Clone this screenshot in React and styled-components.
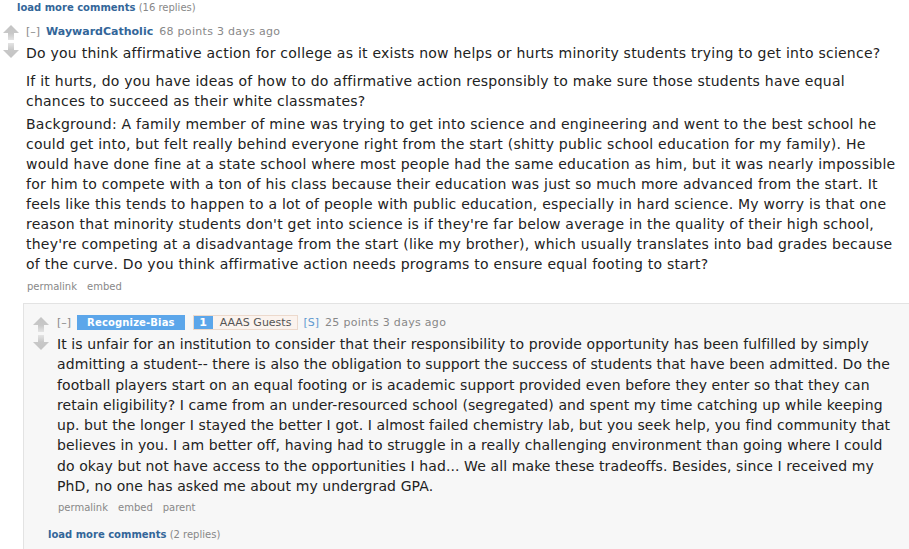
import React from 'react';
import styled, { createGlobalStyle } from 'styled-components';

const GlobalStyle = createGlobalStyle`
  body {
    margin: 0;
    background: #ffffff;
    font-family: "DejaVu Sans", Verdana, sans-serif;
    color: #222222;
  }
`;

const Page = styled.div`
  width: 909px;
  height: 549px;
  overflow: hidden;
  padding-top: 1px;
  box-sizing: border-box;
`;

// "load more comments" row
const LoadMore = styled.div`
  font-size: 10px;
  line-height: 13px;
  padding-left: ${({ indent }) => indent}px;
  margin-top: ${({ top }) => top || 0}px;
  color: #888888;

  b {
    color: #336699;
    font-weight: bold;
  }
`;

const Comment = styled.div`
  display: flex;
  align-items: flex-start;
  margin-top: ${({ top }) => top || 0}px;
`;

const Midcol = styled.div`
  width: ${({ width }) => width}px;
  padding-left: ${({ left }) => left}px;
  padding-top: ${({ top }) => top}px;
  box-sizing: border-box;
  display: flex;
  flex-direction: column;
  gap: 3px;
  flex-shrink: 0;
`;

const Entry = styled.div`
  flex: 1;
  min-width: 0;
`;

const Tagline = styled.div`
  display: flex;
  align-items: center;
  gap: 6px;
  font-size: 11px;
  line-height: 15px;
  color: #888888;
  white-space: nowrap;
`;

const Expand = styled.span`
  color: #888888;
`;

const Author = styled.span`
  color: #336699;
  font-weight: bold;
`;

const Meta = styled.span`
  letter-spacing: 0.3px;
`;

const AuthorFlair = styled.span`
  background: #5ca6ea;
  color: #ffffff;
  font-size: 10px;
  font-weight: bold;
  padding: 0 10px;
  line-height: 15px;
  letter-spacing: 0.15px;
`;

const UserFlair = styled.span`
  display: inline-flex;
  border: 1px solid #ecd9cc;
  background: #fbf3ee;
  color: #555555;
  line-height: 13px;
  margin-left: 2px;
`;

const FlairCount = styled.span`
  background: #5ca6ea;
  color: #ffffff;
  font-weight: bold;
  width: 19px;
  text-align: center;
`;

const FlairText = styled.span`
  padding: 0 6px 0 7px;
`;

const Staff = styled.span`
  color: #5f99cf;
  margin-left: -1px;
`;

const Body = styled.div`
  margin-top: 4px;
  font-size: 14px;
  letter-spacing: ${({ ls }) => ls}px;
  line-height: ${({ lh }) => lh || 20}px;
  color: #222222;
`;

const Para = styled.p`
  margin: 0 0 ${({ gap }) => gap || 0}px 0;
`;

const Line = styled.span`
  display: block;
  white-space: nowrap;
`;

const Buttons = styled.div`
  display: flex;
  gap: 10px;
  font-size: 10px;
  line-height: 13px;
  color: #888888;
  margin-top: ${({ top }) => top}px;
  padding-left: 1px;
`;

const Child = styled.div`
  margin-top: ${({ top }) => top}px;
  margin-left: 23px;
  background: #f7f7f7;
  border-top: 1px solid #e3e3e3;
  border-left: 1px solid #e3e3e3;
  padding-top: 11px;
  height: 400px;
`;

const Arrow = ({ down }) => (
  <svg width="16" height="15" viewBox="0 0 16 15" style={down ? { transform: 'rotate(180deg)' } : undefined}>
    <defs>
      <linearGradient id={down ? 'gd' : 'gu'} x1="0" y1="0" x2="0" y2="1">
        <stop offset="0" stopColor="#c4c4c4" />
        <stop offset="0.55" stopColor="#c8c8c8" />
        <stop offset="1" stopColor="#e4e4e4" />
      </linearGradient>
    </defs>
    <polygon
      points="8,0 16,8 11,8 11,15 5,15 5,8 0,8"
      fill={`url(#${down ? 'gd' : 'gu'})`}
    />
  </svg>
);

const Votes = (props) => (
  <Midcol {...props}>
    <Arrow />
    <Arrow down />
  </Midcol>
);

const parentParas = [
  {
    gap: 8,
    lines: [
      'Do you think affirmative action for college as it exists now helps or hurts minority students trying to get into science?',
    ],
  },
  {
    gap: 3,
    lines: [
      'If it hurts, do you have ideas of how to do affirmative action responsibly to make sure those students have equal',
      'chances to succeed as their white classmates?',
    ],
  },
  {
    gap: 0,
    lines: [
      'Background: A family member of mine was trying to get into science and engineering and went to the best school he',
      'could get into, but felt really behind everyone right from the start (shitty public school education for my family). He',
      'would have done fine at a state school where most people had the same education as him, but it was nearly impossible',
      'for him to compete with a ton of his class because their education was just so much more advanced from the start. It',
      'feels like this tends to happen to a lot of people with public education, especially in hard science. My worry is that one',
      "reason that minority students don't get into science is if they're far below average in the quality of their high school,",
      "they're competing at a disadvantage from the start (like my brother), which usually translates into bad grades because",
      'of the curve. Do you think affirmative action needs programs to ensure equal footing to start?',
    ],
  },
];

const replyLines = [
  'It is unfair for an institution to consider that their responsibility to provide opportunity has been fulfilled by simply',
  'admitting a student-- there is also the obligation to support the success of students that have been admitted. Do the',
  'football players start on an equal footing or is academic support provided even before they enter so that they can',
  'retain eligibility? I came from an under-resourced school (segregated) and spent my time catching up while keeping',
  'up. but the longer I stayed the better I got. I almost failed chemistry lab, but you seek help, you find community that',
  'believes in you. I am better off, having had to struggle in a really challenging environment than going where I could',
  'do okay but not have access to the opportunities I had... We all make these tradeoffs. Besides, since I received my',
  'PhD, no one has asked me about my undergrad GPA.',
];

export default function App() {
  return (
    <Page>
      <GlobalStyle />
      <LoadMore indent={17}>
        <b>load more comments</b> (16 replies)
      </LoadMore>

      <Comment top={10}>
        <Votes width={26} left={3} top={1} />
        <Entry>
          <Tagline>
            <Expand>[–]</Expand>
            <Author>WaywardCatholic</Author>
            <Meta>68 points 3 days ago</Meta>
          </Tagline>
          <Body ls={0.24}>
            {parentParas.map((p, i) => (
              <Para key={i} gap={p.gap}>
                {p.lines.map((l, j) => <Line key={j}>{l}</Line>)}
              </Para>
            ))}
          </Body>
          <Buttons top={6}>
            <span>permalink</span>
            <span>embed</span>
          </Buttons>
        </Entry>
      </Comment>

      <Child top={10}>
        <Comment>
          <Votes width={33} left={9} top={2} />
          <Entry>
            <Tagline>
              <Expand>[–]</Expand>
              <AuthorFlair>Recognize-Bias</AuthorFlair>
              <UserFlair>
                <FlairCount>1</FlairCount>
                <FlairText>AAAS Guests</FlairText>
              </UserFlair>
              <Staff>[S]</Staff>
              <Meta>25 points 3 days ago</Meta>
            </Tagline>
            <Body lh={20.3} ls={0.1}>
              <Para>
                {replyLines.map((l, j) => <Line key={j}>{l}</Line>)}
              </Para>
            </Body>
            <Buttons top={5}>
              <span>permalink</span>
              <span>embed</span>
              <span>parent</span>
            </Buttons>
          </Entry>
        </Comment>
        <LoadMore indent={24} top={14}>
          <b>load more comments</b> (2 replies)
        </LoadMore>
      </Child>
    </Page>
  );
}
